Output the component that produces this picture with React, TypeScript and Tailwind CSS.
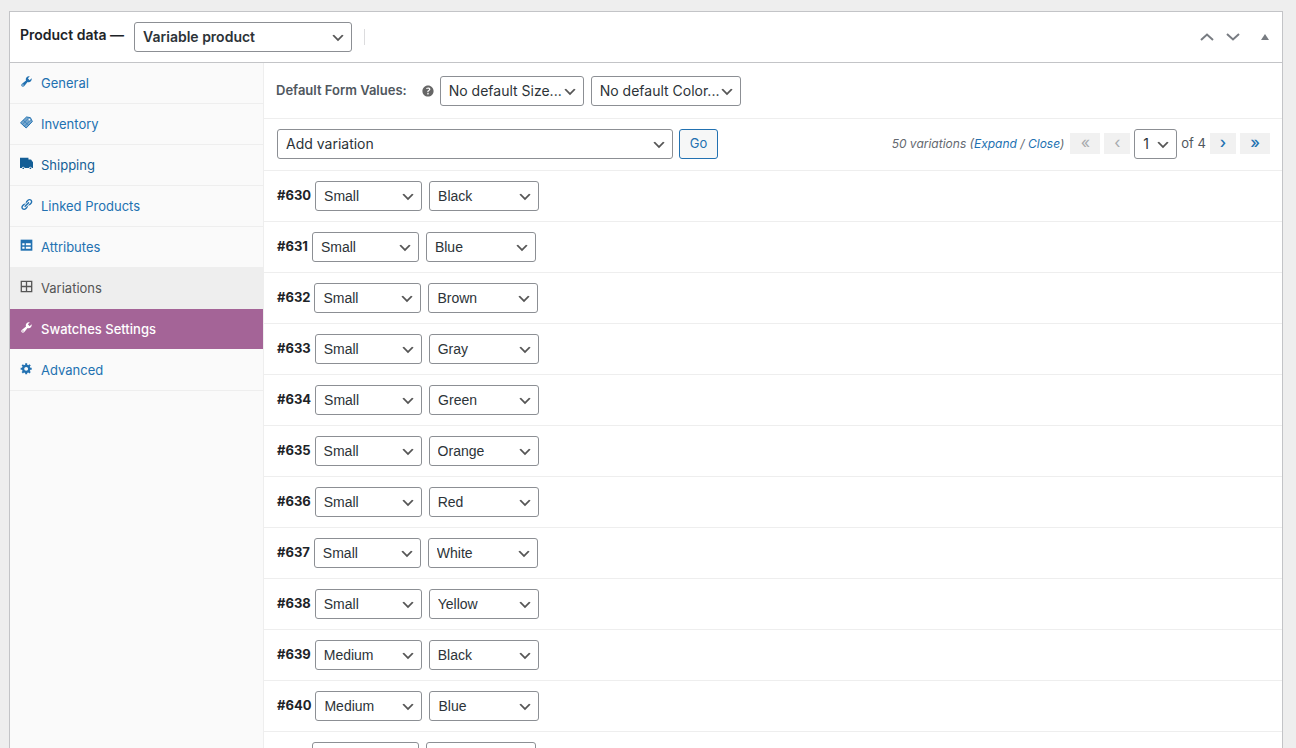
import type { ReactNode } from 'react';
import clsx from 'clsx';

type TabIcon = 'wrench' | 'tag' | 'truck' | 'link' | 'list' | 'grid' | 'gear';

interface Tab {
  label: string;
  icon: TabIcon;
  variant?: 'active' | 'highlight' | 'hover';
}

const TABS: Tab[] = [
  { label: 'General', icon: 'wrench' },
  { label: 'Inventory', icon: 'tag' },
  { label: 'Shipping', icon: 'truck', variant: 'hover' },
  { label: 'Linked Products', icon: 'link' },
  { label: 'Attributes', icon: 'list' },
  { label: 'Variations', icon: 'grid', variant: 'active' },
  { label: 'Swatches Settings', icon: 'wrench', variant: 'highlight' },
  { label: 'Advanced', icon: 'gear' },
];

const SIZES = ['Small', 'Medium', 'Large'];
const COLORS = ['Black', 'Blue', 'Brown', 'Gray', 'Green', 'Orange', 'Red', 'White', 'Yellow'];

const VARIATIONS = [
  { id: 630, size: 'Small', color: 'Black' },
  { id: 631, size: 'Small', color: 'Blue' },
  { id: 632, size: 'Small', color: 'Brown' },
  { id: 633, size: 'Small', color: 'Gray' },
  { id: 634, size: 'Small', color: 'Green' },
  { id: 635, size: 'Small', color: 'Orange' },
  { id: 636, size: 'Small', color: 'Red' },
  { id: 637, size: 'Small', color: 'White' },
  { id: 638, size: 'Small', color: 'Yellow' },
  { id: 639, size: 'Medium', color: 'Black' },
  { id: 640, size: 'Medium', color: 'Blue' },
  { id: 641, size: 'Medium', color: 'Brown' },
];

// All icons are drawn on a 20x20 grid
const ICONS: Record<TabIcon, ReactNode> = {
  wrench: (
    <path d="M16.68 9.77c-1.34 1.34-3.3 1.67-4.95.99l-5.41 6.52c-.99.99-2.59.99-3.58 0s-.99-2.59 0-3.57l6.52-5.42c-.68-1.65-.35-3.61.99-4.95 1.28-1.28 3.12-1.62 4.72-1.06l-2.89 2.89 2.82 2.82 2.86-2.87c.53 1.58.18 3.39-1.08 4.65zM3.81 16.21c.4.39 1.04.39 1.43 0 .4-.4.4-1.04 0-1.43-.39-.4-1.03-.4-1.43 0-.39.39-.39 1.03 0 1.43z" />
  ),
  tag: (
    <>
      <path
        d="M.8 10.5 10 1.500l6 1 3 6L9.500 18.500z"
        fillOpacity="0.6"
        stroke="currentColor"
        strokeWidth="1.500"
        strokeLinejoin="round"
      />
      <path d="M3.500 13l9-9M6.500 16l9.500-9.500M5 6.500l8.500 8" fill="none" stroke="currentColor" strokeWidth="1" />
      <circle cx="14.500" cy="5.500" r="1.300" fill="#fff" />
    </>
  ),
  truck: (
    <path d="M0 1h13v3h4l3 4v9h-2a2 2 0 0 0-4 0H7a2 2 0 0 0-4 0H0zM5 16a1.300 1.300 0 1 1 0 2.600A1.300 1.300 0 0 1 5 16zM16 16a1.300 1.300 0 1 1 0 2.600 1.300 1.300 0 0 1 0-2.600z" />
  ),
  link: (
    <path d="M17.74 2.76c1.68 1.69 1.68 4.41 0 6.1l-1.53 1.52c-1.12 1.12-2.7 1.47-4.14 1.09l2.62-2.61.76-.77.76-.76c.84-.84.84-2.2 0-3.04-.84-.85-2.2-.85-3.04 0l-.77.76-3.38 3.38c-.37-1.44-.02-3.02 1.1-4.14l1.52-1.53c1.69-1.68 4.42-1.68 6.1 0zM8.59 13.43l5.34-5.34c.42-.42.42-1.1 0-1.52-.44-.43-1.13-.39-1.53 0l-5.33 5.34c-.42.42-.42 1.1 0 1.52.44.43 1.13.39 1.52 0zm-.76 2.29l4.14-4.15c.38 1.44.03 3.02-1.09 4.14l-1.52 1.53c-1.69 1.68-4.41 1.68-6.1 0-1.68-1.68-1.68-4.42 0-6.1l1.53-1.52c1.12-1.12 2.7-1.47 4.14-1.1l-4.14 4.15c-.85.84-.85 2.2 0 3.05.84.84 2.2.84 3.04 0z" />
  ),
  list: (
    <>
      <path d="M1 1h18v17H1z" />
      <path d="M3.500 6.500H7v3H3.500zM9 6.500h7.500v3H9zM3.500 12H7v3H3.500zM9 12h7.500v3H9z" className="fill-white" />
    </>
  ),
  grid: <path fillRule="evenodd" d="M1 1h18v18H1zM3 3v6h6V3zM11 3v6h6V3zM3 11v6h6v-6zM11 11v6h6v-6z" />,
  gear: (
    <path d="M18 12h-2.180c-.17.7-.44 1.350-.81 1.930l1.540 1.540-2.100 2.100-1.540-1.540c-.58.36-1.230.63-1.910.79V19H8v-2.180c-.68-.16-1.330-.43-1.910-.79l-1.540 1.540-2.120-2.120 1.540-1.540c-.36-.58-.63-1.230-.79-1.910H1V9.030h2.170c.16-.7.44-1.350.8-1.940L2.430 5.550l2.100-2.100 1.540 1.540c.58-.37 1.240-.64 1.930-.81V2h3v2.180c.68.16 1.330.43 1.910.79l1.540-1.540 2.120 2.120-1.540 1.540c.36.59.64 1.240.8 1.940H18V12zm-8.500 1.500c1.660 0 3-1.340 3-3s-1.340-3-3-3-3 1.340-3 3 1.340 3 3 3z" />
  ),
};

interface SelectProps {
  label: string;
  value: string;
  options?: string[];
  width: string;
  className?: string;
}

function Select({ label, value, options = [value], width, className }: SelectProps) {
  return (
    <span className={clsx('relative inline-flex shrink-0', width)}>
      <select
        aria-label={label}
        defaultValue={value}
        className={clsx(
          'h-[30px] w-full appearance-none rounded-[3px] border border-[#8c8f94] bg-white pl-2 pr-5 text-sm text-[#2c3338]',
          className,
        )}
      >
        {options.map((option) => (
          <option key={option}>{option}</option>
        ))}
      </select>
      <svg viewBox="0 0 20 20" className="pointer-events-none absolute right-[6px] top-2 size-4 fill-[#555]">
        <path d="M5 6l5 5 5-5 2 1-7 7-7-7 2-1z" />
      </svg>
    </span>
  );
}

function PanelHeader() {
  return (
    <header className="flex h-[51px] items-center border-b border-[#c3c4c7] px-[10px]">
      <h2 className="mr-[10px] pb-1 text-sm font-semibold text-[#1d2327]">Product data —</h2>
      <Select
        label="Product type"
        value="Variable product"
        options={['Simple product', 'Grouped product', 'External/Affiliate product', 'Variable product']}
        width="w-[218px]"
        className="font-semibold"
      />
      <span className="ml-3 h-4 w-px bg-[#dcdcde]" />
      <div className="ml-auto flex items-center text-[#787c82]">
        <button type="button" aria-label="Move up" className="flex w-[26px] justify-center">
          <svg viewBox="0 0 14 8" className="h-2 w-[14px]" fill="none" stroke="currentColor" strokeWidth="2">
            <path d="M1 7l6-5.500L13 7" />
          </svg>
        </button>
        <button type="button" aria-label="Move down" className="flex w-[26px] justify-center">
          <svg viewBox="0 0 14 8" className="h-2 w-[14px]" fill="none" stroke="currentColor" strokeWidth="2">
            <path d="M1 1l6 5.500L13 1" />
          </svg>
        </button>
        <button type="button" aria-label="Toggle panel" className="ml-3 flex w-[14px] justify-center">
          <svg viewBox="0 0 8 6" className="h-[6px] w-2 fill-current">
            <path d="M4 0l4 6H0z" />
          </svg>
        </button>
      </div>
    </header>
  );
}

function Sidebar() {
  return (
    <nav className="w-[254px] shrink-0 border-r border-[#eee] bg-[#fafafa]">
      <ul>
        {TABS.map((tab) => (
          <li key={tab.label}>
            <a
              href="#"
              className={clsx(
                'flex h-[41px] items-center gap-2 border-b pl-[10px] pt-[2px] text-[13px]',
                !tab.variant && 'border-[#eee] text-[#2271b1]',
                tab.variant === 'hover' && 'border-[#eee] text-[#135e96]',
                tab.variant === 'active' && 'border-[#eee] bg-[#eee] text-[#555]',
                tab.variant === 'highlight' && 'border-[#fafafa] bg-[#a46497] font-medium text-white',
              )}
            >
              <svg viewBox="0 0 20 20" className="mb-[5px] size-[13px] fill-current">
                {ICONS[tab.icon]}
              </svg>
              {tab.label}
            </a>
          </li>
        ))}
      </ul>
    </nav>
  );
}

function DefaultValues() {
  return (
    <div className="flex h-14 items-center border-b border-[#eee] pl-3">
      <strong className="text-[13px] font-semibold text-[#50575e]">Default Form Values:</strong>
      <svg viewBox="0 0 20 20" role="img" aria-label="Help" className="ml-[13px] mr-1 size-4 fill-[#666]">
        <path d="M17 10c0-3.870-3.140-7-7-7-3.870 0-7 3.130-7 7s3.130 7 7 7c3.860 0 7-3.130 7-7zm-6.300 1.480H9.140v-.43c0-.38.08-.7.24-.98s.46-.57.88-.89c.41-.29.68-.53.81-.71.14-.18.2-.39.2-.62 0-.25-.09-.44-.28-.58-.19-.13-.45-.19-.79-.19-.58 0-1.250.15-2 .46l-.64-1.280c.87-.49 1.800-.74 2.770-.74.81 0 1.450.2 1.920.58.48.39.71.91.71 1.550 0 .43-.09.8-.29 1.110-.19.32-.57.67-1.110 1.060-.38.28-.61.49-.71.63-.1.15-.15.34-.15.57v.46zm-1.470 2.740c-.18-.17-.27-.42-.27-.73 0-.33.08-.58.26-.75s.43-.25.77-.25c.32 0 .57.09.75.26s.27.42.27.74c0 .3-.09.55-.27.72-.18.18-.43.27-.75.27-.33 0-.58-.09-.76-.26z" />
      </svg>
      <div className="flex gap-[7px]">
        <Select label="Default size" value="No default Size..." options={['No default Size...', ...SIZES]} width="w-36" />
        <Select
          label="Default color"
          value="No default Color..."
          options={['No default Color...', ...COLORS]}
          width="w-[150px]"
        />
      </div>
    </div>
  );
}

interface PageButtonProps {
  label: string;
  disabled?: boolean;
  double?: boolean;
  back?: boolean;
}

function PageButton({ label, disabled, double, back }: PageButtonProps) {
  const glyph = back ? (double ? '«' : '‹') : double ? '»' : '›';
  return (
    <button
      type="button"
      aria-label={label}
      disabled={disabled}
      className={clsx(
        'flex h-[21px] items-center justify-center bg-[#f1f1f1] pb-[3px] text-base',
        double ? 'w-[30px]' : 'w-[26px]',
        disabled ? 'text-[#a7aaad]' : 'font-medium text-[#2271b1]',
      )}
    >
      {glyph}
    </button>
  );
}

function Toolbar() {
  return (
    <div className="flex h-[52px] items-center border-b border-[#eee] pb-[2px] pl-[13px] pr-3">
      <Select label="Bulk action" value="Add variation" width="w-[396px]" />
      <button
        type="button"
        className="ml-[6px] h-[30px] w-[39px] rounded-[3px] border border-[#2271b1] bg-[#f6f7f7] text-[13px] text-[#2271b1]"
      >
        Go
      </button>
      <div className="ml-auto flex items-center gap-1 text-[13px] text-[#50575e]">
        <span className="mr-[2px] text-xs italic text-[#646970]">
          50 variations (
          <a href="#" className="text-[#2271b1]">
            Expand
          </a>{' '}
          /{' '}
          <a href="#" className="text-[#2271b1]">
            Close
          </a>
          )
        </span>
        <PageButton label="First page" double back disabled />
        <PageButton label="Previous page" back disabled />
        <Select label="Current page" value="1" options={['1', '2', '3', '4']} width="w-[43px]" />
        <span>of 4</span>
        <PageButton label="Next page" />
        <PageButton label="Last page" double />
      </div>
    </div>
  );
}

function VariationRow({ id, size, color }: { id: number; size: string; color: string }) {
  return (
    <li className="flex h-[51px] items-center border-b border-[#eee] pl-[13px]">
      <strong className="mr-1 text-[13px] font-bold text-[#1d2327]">#{id}</strong>
      <Select
        label={`Size of #${id}`}
        value={size}
        options={SIZES}
        width="w-[107px]"
        className="font-['Liberation_Sans',sans-serif]"
      />
      <Select
        label={`Color of #${id}`}
        value={color}
        options={COLORS}
        width="ml-[7px] w-[110px]"
        className="font-['Liberation_Sans',sans-serif]"
      />
    </li>
  );
}

export default function App() {
  return (
    <div className="flex h-screen overflow-hidden bg-[#eee] pl-[9px] pr-[13px] pt-[11px] font-['Inter',sans-serif]">
      <section className="flex min-w-0 flex-1 flex-col border border-b-0 border-[#c3c4c7] bg-white">
        <PanelHeader />
        <div className="flex min-h-0 flex-1">
          <Sidebar />
          <main className="min-w-0 flex-1">
            <DefaultValues />
            <Toolbar />
            <ul>
              {VARIATIONS.map((variation) => (
                <VariationRow key={variation.id} {...variation} />
              ))}
            </ul>
          </main>
        </div>
      </section>
    </div>
  );
}
